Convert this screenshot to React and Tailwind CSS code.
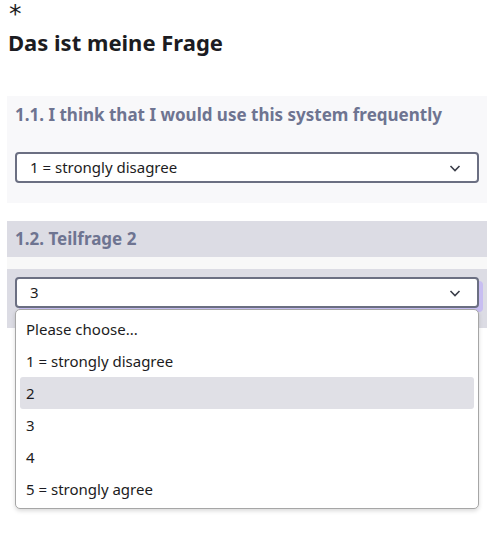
import React from 'react';

const options = ['Please choose...', '1 = strongly disagree', '2', '3', '4', '5 = strongly agree'];

const Chevron = () => (
  <svg className="w-4 h-4 text-[#3b3e4a]" viewBox="0 0 16 16" fill="none" stroke="currentColor" strokeWidth="1.6">
    <path d="M3.5 6l4.5 4.5L12.5 6" />
  </svg>
);

const SelectBox = ({ value, focused }) => (
  <div
    className={`flex items-center justify-between h-[31px] pl-[13px] pr-[14px] bg-white border-2 border-[#6b6f82] rounded-[4px] text-[15px] text-[#1c1c22] ${
      focused ? 'shadow-[4px_4px_0_#c8bef2]' : ''
    }`}
    style={{ fontFamily: '"Noto Sans", "Open Sans", sans-serif' }}
  >
    <span>{value}</span>
    <Chevron />
  </div>
);

export default function App() {
  return (
    <div className="bg-white min-h-[543px] w-[494px] pb-8" style={{ fontFamily: '"Noto Sans", "Liberation Sans", sans-serif' }}>
      <div
        className="px-[9px] text-[25px] leading-[28px] text-[#1c1c22]"
        style={{ fontFamily: '"DejaVu Sans", sans-serif' }}
      >
        *
      </div>
      <h1 className="px-2 text-[22px] font-bold leading-[28px] text-[#1c1c22]">Das ist meine Frage</h1>

      <div className="mx-[7px] mt-[40px] bg-[#f8f8fa] pt-[7px] pb-[20px]">
        <h2 className="px-2 text-[17px] font-bold leading-[24px] text-[#6e7491]">
          1.1. I think that I would use this system frequently
        </h2>
        <div className="px-2 mt-[25px]">
          <SelectBox value="1 = strongly disagree" />
        </div>
      </div>

      <div className="mx-[7px] mt-[18px]">
        <h2 className="bg-[#dcdce4] px-2 h-[36px] flex items-center text-[17px] font-bold text-[#6e7491]">
          1.2. Teilfrage 2
        </h2>
        <div className="h-[12px] bg-[#f8f8f8]" />
        <div className="relative bg-[#dcdce4] pt-[8px] pb-[20px] px-2">
          <SelectBox value="3" focused />
          <ul
            className="absolute left-2 right-2 top-[40px] z-10 bg-white border border-[#a6a6a6] rounded-[5px] shadow-[0_2px_4px_rgba(0,0,0,0.15)] py-[3px] px-[4px] text-[15px] text-[#1c1c22]"
            style={{ fontFamily: '"Noto Sans", "Open Sans", sans-serif' }}
          >
            {options.map((o) => (
              <li
                key={o}
                className={`h-[32px] flex items-center px-[6px] rounded-[3px] ${o === '2' ? 'bg-[#e0e0e6]' : ''}`}
              >
                {o}
              </li>
            ))}
          </ul>
        </div>
      </div>
    </div>
  );
}
